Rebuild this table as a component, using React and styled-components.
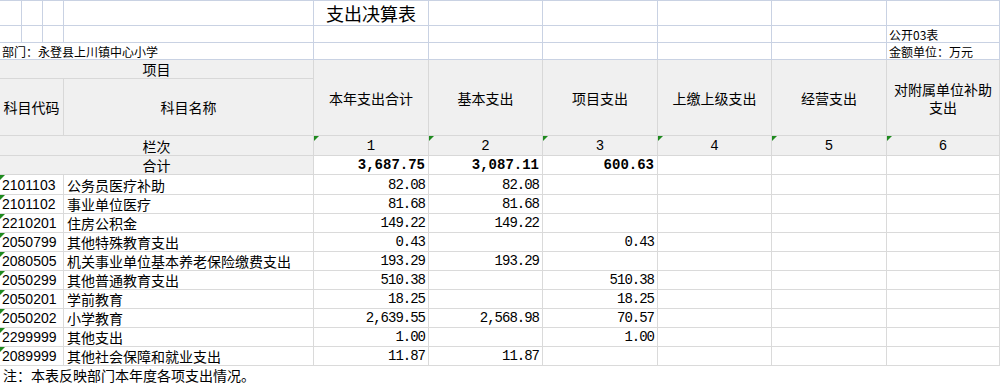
import React from 'react';
import styled, { createGlobalStyle, css } from 'styled-components';

const GlobalStyle = createGlobalStyle`
  html, body {
    margin: 0;
    padding: 0;
    background: #ffffff;
  }
  body {
    font-family: "Noto Sans CJK SC", sans-serif;
    color: #000000;
  }
`;

const COLS = [22, 21, 21, 250, 115, 114, 115, 114, 115, 113];

const HEADS = ['本年支出合计', '基本支出', '项目支出', '上缴上级支出', '经营支出', '对附属单位补助支出'];

const TOTALS = ['3,687.75', '3,087.11', '600.63', '', '', ''];

const ROWS = [
  ['2101103', '公务员医疗补助', '82.08', '82.08', ''],
  ['2101102', '事业单位医疗', '81.68', '81.68', ''],
  ['2210201', '住房公积金', '149.22', '149.22', ''],
  ['2050799', '其他特殊教育支出', '0.43', '', '0.43'],
  ['2080505', '机关事业单位基本养老保险缴费支出', '193.29', '193.29', ''],
  ['2050299', '其他普通教育支出', '510.38', '', '510.38'],
  ['2050201', '学前教育', '18.25', '', '18.25'],
  ['2050202', '小学教育', '2,639.55', '2,568.98', '70.57'],
  ['2299999', '其他支出', '1.00', '', '1.00'],
  ['2089999', '其他社会保障和就业支出', '11.87', '11.87', ''],
];

const greenMark = css`
  position: relative;
  &::before {
    content: '';
    position: absolute;
    top: 0;
    left: 0;
    border-style: solid;
    border-width: 5px 5px 0 0;
    border-color: #1f8a1f transparent transparent transparent;
  }
`;

export default function App() {
  return (
    <>
      <GlobalStyle />
      <Sheet>
        <colgroup>
          {COLS.map((w, i) => <col key={i} style={{ width: w }} />)}
        </colgroup>
        <tbody>
          <Row $h={25}>
            <GridCell /><GridCell /><GridCell /><GridCell />
            <TitleCell>支出决算表</TitleCell>
            <GridCell /><GridCell /><GridCell /><GridCell /><GridCell />
          </Row>
          <Row $h={17}>
            <GridCell /><GridCell /><GridCell /><GridCell />
            <GridCell /><GridCell /><GridCell /><GridCell /><GridCell />
            <GridCell>公开03表</GridCell>
          </Row>
          <Row $h={17}>
            <GridCell colSpan={4}>部门：永登县上川镇中心小学</GridCell>
            <GridCell /><GridCell /><GridCell /><GridCell /><GridCell />
            <GridCell>金额单位：万元</GridCell>
          </Row>
          <Row $h={19}>
            <HeadCell colSpan={4}>项目</HeadCell>
            {HEADS.map((h) => <HeadCell key={h} rowSpan={2}>{h}</HeadCell>)}
          </Row>
          <Row $h={57}>
            <HeadCell colSpan={3}>科目代码</HeadCell>
            <HeadCell>科目名称</HeadCell>
          </Row>
          <Row $h={20}>
            <HeadCell colSpan={4}>栏次</HeadCell>
            {[1, 2, 3, 4, 5, 6].map((n) => <IndexCell key={n}>{n}</IndexCell>)}
          </Row>
          <Row $h={18}>
            <HeadCell colSpan={4}>合计</HeadCell>
            {TOTALS.map((v, i) => <AmountCell key={i} $bold>{v}</AmountCell>)}
          </Row>
          {ROWS.map(([code, name, total, basic, project], i) => (
            <Row key={code} $h={i === 0 ? 20 : 19}>
              <CodeCell colSpan={3}>{code}</CodeCell>
              <NameCell>{name}</NameCell>
              <AmountCell>{total}</AmountCell>
              <AmountCell>{basic}</AmountCell>
              <AmountCell>{project}</AmountCell>
              <AmountCell />
              <AmountCell />
              <AmountCell />
            </Row>
          ))}
          <Row $h={19}>
            <NoteCell colSpan={10}>注：本表反映部门本年度各项支出情况。</NoteCell>
          </Row>
        </tbody>
      </Sheet>
    </>
  );
}

const Sheet = styled.table`
  width: 1000px;
  table-layout: fixed;
  border-collapse: separate;
  border-spacing: 0;
  border-top: 1px solid #c9d2e3;
`;

const Row = styled.tr`
  height: ${(p) => p.$h}px;
`;

const GridCell = styled.td`
  box-sizing: border-box;
  border-right: 1px solid #c9d2e3;
  border-bottom: 1px solid #c9d2e3;
  padding: 0 2px;
  font-size: 12px;
  line-height: 15px;
  vertical-align: bottom;
  white-space: nowrap;
  overflow: visible;
`;

const TitleCell = styled(GridCell)`
  font-size: 18px;
  line-height: 24px;
  text-align: center;
  vertical-align: middle;
`;

const HeadCell = styled.td`
  box-sizing: border-box;
  background: #f0f0f0;
  border-right: 1px solid #d8d8d8;
  border-bottom: 1px solid #d8d8d8;
  padding: 0 2px;
  font-size: 14px;
  line-height: 18px;
  text-align: center;
  vertical-align: middle;
`;

const IndexCell = styled(HeadCell)`
  font-family: "Liberation Mono", monospace;
  vertical-align: bottom;
  ${greenMark}
`;

const DataCell = styled.td`
  box-sizing: border-box;
  border-right: 1px solid #dadada;
  border-bottom: 1px solid #dadada;
  font-size: 14px;
  line-height: 18px;
  vertical-align: bottom;
  white-space: nowrap;
  overflow: visible;
`;

const CodeCell = styled(DataCell)`
  padding: 0 0 0 2px;
  font-family: "Liberation Sans", "Noto Sans CJK SC", sans-serif;
  ${greenMark}
`;

const NameCell = styled(DataCell)`
  padding: 0 0 0 3px;
`;

const AmountCell = styled(DataCell)`
  padding: 0 3px 0 0;
  text-align: right;
  font-family: "Liberation Mono", monospace;
  font-weight: ${(p) => (p.$bold ? 700 : 400)};
  letter-spacing: ${(p) => (p.$bold ? '0' : '-1px')};
`;

const NoteCell = styled.td`
  padding: 0 0 0 3px;
  font-size: 14px;
  line-height: 17px;
  vertical-align: middle;
  white-space: nowrap;
`;
